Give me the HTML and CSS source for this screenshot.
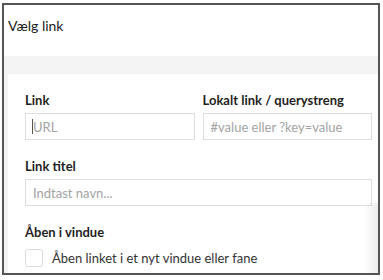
FILE: index.html
```html
<!DOCTYPE html>
<html>
	<head>
		<meta charset="UTF-8">
		<link rel="stylesheet" href="styles.css">
	</head>
	<body>
		<div class="frame">
			<div class="header">Vælg link</div>
			<div class="content">
				<div class="card">
					<div class="row">
						<div class="field">
							<label class="label" for="url">Link</label>
							<div class="inputWrap">
								<input type="text" id="url" class="textInput" placeholder="URL">
								<span class="caret"></span>
							</div>
						</div>
						<div class="field">
							<label class="label" for="anchor">Lokalt link / querystreng</label>
							<input type="text" id="anchor" class="textInput" placeholder="#value eller ?key=value">
						</div>
					</div>

					<div class="field spaced">
						<label class="label" for="title">Link titel</label>
						<input type="text" id="title" class="textInput" placeholder="Indtast navn...">
					</div>

					<div class="field spaced">
						<div class="label">Åben i vindue</div>
						<label class="check">
							<span class="box"></span>
							<span>Åben linket i et nyt vindue eller fane</span>
						</label>
					</div>
				</div>
			</div>
		</div>
	</body>
</html>
```

FILE: styles.css
```css
body {
	margin: 0;
	background-color: white;
	font-family: Lato, 'Noto Sans', sans-serif;
	color: #1f1f22;
}

.frame {
	margin: 3px 3px 0 2px;
	height: 268px;
	border: 2px solid #555;
	display: flex;
	flex-direction: column;
	overflow: hidden;
}

.header {
	height: 40px;
	padding: 11px 0 0 4px;
	font-size: 14px;
	line-height: 20px;
	color: #1b1b1d;
}

.content {
	flex: 1;
	background-color: #f5f4f4;
	padding: 18px 0 0 4px;
	display: flex;
}

.card {
	position: relative;
	flex: 1;
	background-color: white;
	padding: 18px 6px 0 17px;
}

.card::after {
	content: "";
	position: absolute;
	right: 0;
	bottom: 0;
	width: 14px;
	height: 70px;
	background: linear-gradient(to right, rgba(0,0,0,0), rgba(0,0,0,0.07));
}

.row {
	display: grid;
	grid-template-columns: 1fr 1fr;
	gap: 8px;
}

.field {
	display: flex;
	flex-direction: column;
	gap: 5px;
}

.spaced {
	margin-top: 18px;
}

.label {
	font-size: 13px;
	font-weight: bold;
	line-height: 16px;
}

.inputWrap {
	position: relative;
}

.textInput {
	box-sizing: border-box;
	width: 100%;
	height: 27px;
	margin: 0;
	padding: 0 7px;
	border: 1px solid #dedede;
	border-radius: 0;
	font-family: Lato, 'Noto Sans', sans-serif;
	font-size: 13px;
	color: #333;
	outline: none;
}

.textInput::placeholder {
	color: #a3a3a3;
}

.caret {
	position: absolute;
	left: 7px;
	top: 6px;
	width: 1px;
	height: 15px;
	background-color: #555;
}

.check {
	display: flex;
	align-items: center;
	gap: 9px;
	margin-top: 4px;
	font-size: 13px;
	line-height: 18px;
	color: #333;
}

.box {
	box-sizing: border-box;
	width: 18px;
	height: 18px;
	border: 1px solid #dcdcdc;
	border-radius: 3px;
}
```
